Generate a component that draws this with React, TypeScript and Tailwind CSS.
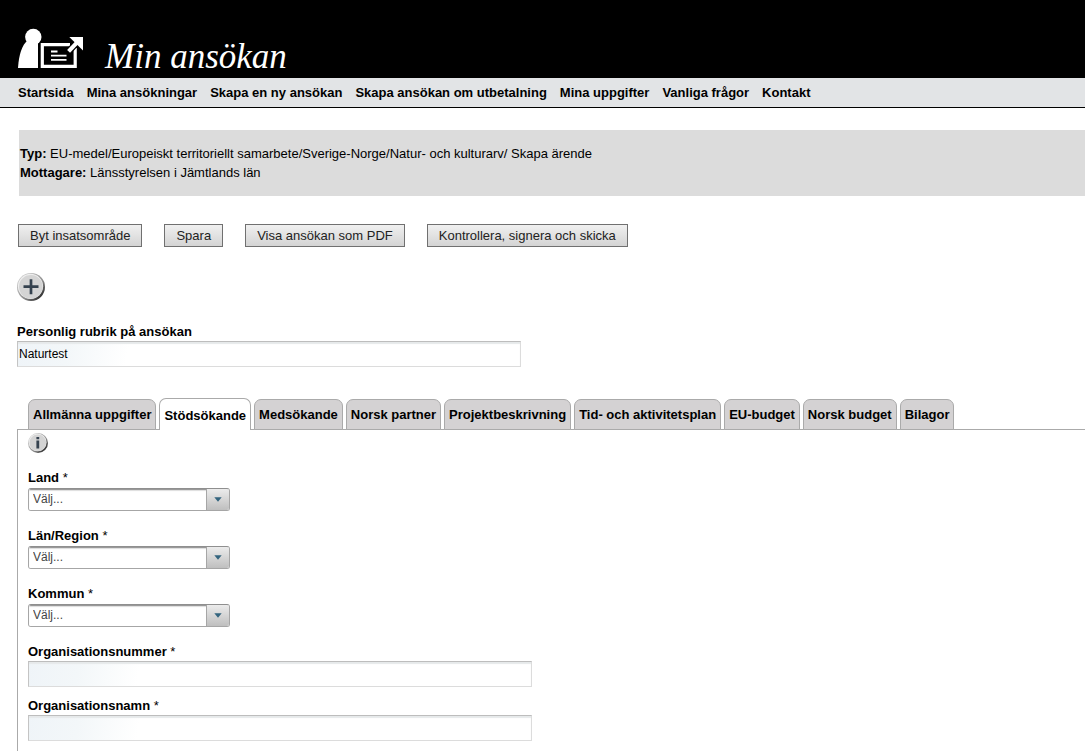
import { useState } from 'react';

const menu = [
  'Startsida',
  'Mina ansökningar',
  'Skapa en ny ansökan',
  'Skapa ansökan om utbetalning',
  'Mina uppgifter',
  'Vanliga frågor',
  'Kontakt',
];

const actions = ['Byt insatsområde', 'Spara', 'Visa ansökan som PDF', 'Kontrollera, signera och skicka'];

const tabs = [
  'Allmänna uppgifter',
  'Stödsökande',
  'Medsökande',
  'Norsk partner',
  'Projektbeskrivning',
  'Tid- och aktivitetsplan',
  'EU-budget',
  'Norsk budget',
  'Bilagor',
];

function Logo() {
  return (
    <svg width="66" height="41" viewBox="0 0 66 41" fill="none" aria-hidden="true">
      <circle cx="15.3" cy="9" r="8.2" fill="#fff" />
      <path d="M0 40C.8 27 4 17 9.5 12.5L20 13V40Z" fill="#fff" />
      <path d="M52 16.6H24.3V38.3H57.2V20" stroke="#fff" strokeWidth="3.2" />
      <path d="M33 23.5h6.5M33 27.7h15.5M33 31.9h15.5" stroke="#fff" strokeWidth="1.8" />
      {/* Arrow with a black edge that cuts the corner of the frame */}
      <path d="M49.8 24.3L60 13.5" stroke="#000" strokeWidth="6.5" />
      <path d="M51.3 9H65V22.4Z" fill="#fff" />
      <path d="M50.6 23.4L60 13.5" stroke="#fff" strokeWidth="4" />
    </svg>
  );
}

function TextField({ id, label, value, required }: { id: string; label: string; value?: string; required?: boolean }) {
  return (
    <div className="flex flex-col">
      <label htmlFor={id} className="h-5 leading-[22px] font-bold">
        {label}
        {required && <span className="font-normal"> *</span>}
      </label>
      <input
        id={id}
        type="text"
        defaultValue={value}
        className="h-[26px] w-full max-w-[504px] border border-[#dcdcdc] border-t-[#bdbdbd] border-l-[#c4c4c4] bg-[linear-gradient(100deg,#eff4f8_0,#f3f7f9_50px,#fff_110px)] px-px text-xs shadow-[inset_0_2px_1px_#e6e9ea] outline-none"
      />
    </div>
  );
}

function SelectField({ id, label }: { id: string; label: string }) {
  return (
    <div className="flex flex-col">
      <label htmlFor={id} className="h-5 leading-[22px] font-bold">
        {label}
        <span className="font-normal"> *</span>
      </label>
      <div className="relative mt-px h-[23px] w-[202px] overflow-hidden rounded-[3px] border border-[#a6a6a6] border-t-[#8f8f8f]">
        <select
          id={id}
          className="block h-full w-full appearance-none bg-white pr-7 pb-0.5 pl-1 text-xs text-[#444] shadow-[inset_0_1px_0_#999,inset_0_2px_1px_#ddd] outline-none"
        >
          <option>Välj...</option>
        </select>
        <span className="pointer-events-none absolute inset-y-0 right-0 flex w-[23px] items-center justify-center border-l border-[#a6a6a6] bg-linear-to-b from-[#ececec] to-[#bfbfbf]">
          <svg width="8" height="5" viewBox="0 0 8 5" aria-hidden="true">
            <path d="M.3 .3h7.4L4 4.7Z" fill="#33647e" />
          </svg>
        </span>
      </div>
    </div>
  );
}

export default function App() {
  const [active, setActive] = useState('Stödsökande');

  return (
    <div className="flex min-h-screen flex-col bg-white font-['Liberation_Sans',Arial,sans-serif] text-[13px] text-black">
      {/* Header */}
      <header className="flex h-[78px] items-end gap-[21px] bg-black px-[18px] pb-[9px]">
        <Logo />
        <h1 className="font-['Liberation_Serif',serif] text-[35px] leading-6 text-white italic">Min ansökan</h1>
      </header>

      {/* Menu */}
      <nav className="flex h-[30px] items-center gap-[13px] border-b border-black bg-[#e2e4e6] px-[18px] font-bold whitespace-nowrap">
        {menu.map((item) => (
          <a key={item} href="#">
            {item}
          </a>
        ))}
      </nav>

      <main className="flex flex-1 flex-col pt-[22px] pl-[17px]">
        {/* Application info */}
        <section className="ml-0.5 bg-[#dcdcdc] px-px py-3.5 leading-[19px]">
          <p>
            <b>Typ:</b> EU-medel/Europeiskt territoriellt samarbete/Sverige-Norge/Natur- och kulturarv/ Skapa ärende
          </p>
          <p>
            <b>Mottagare:</b> Länsstyrelsen i Jämtlands län
          </p>
        </section>

        {/* Actions */}
        <div className="mt-7 ml-px flex flex-wrap gap-[22px]">
          {actions.map((action) => (
            <button
              key={action}
              type="button"
              className="h-[23px] border border-[#707070] bg-linear-to-b from-[#f0f0f0] to-[#d4d4d4] px-[11px] text-[#222]"
            >
              {action}
            </button>
          ))}
        </div>

        <button type="button" aria-label="Lägg till" className="mt-[26px] mb-5 w-7">
          <svg width="28" height="28" viewBox="0 0 28 28" aria-hidden="true">
            <defs>
              <linearGradient id="rim" x1="0" y1="0" x2="1" y2="1">
                <stop offset="0.2" stopColor="#c4c4c4" />
                <stop offset="0.6" stopColor="#8a8a8a" />
                <stop offset="0.9" stopColor="#222" />
              </linearGradient>
            </defs>
            <circle cx="14" cy="14" r="14" fill="url(#rim)" />
            <circle cx="13.5" cy="13.3" r="12.6" fill="#eee" />
            <circle cx="13.8" cy="13.8" r="11.8" fill="#d4d4d4" />
            <path d="M6.5 13.7h15M14 6.2v15" stroke="#35424f" strokeWidth="2.7" />
          </svg>
        </button>

        <TextField id="rubrik" label="Personlig rubrik på ansökan" value="Naturtest" />

        {/* Tabs */}
        <div role="tablist" className="relative z-10 mt-[31px] -mb-px ml-[11px] flex items-end gap-[3px] font-bold whitespace-nowrap">
          {tabs.map((tab) => (
            <button
              key={tab}
              type="button"
              role="tab"
              aria-selected={tab === active}
              onClick={() => setActive(tab)}
              className={
                tab === active
                  ? 'h-8 rounded-t-[7px] border border-b-0 border-[#aaa] bg-white px-1 pt-0.5'
                  : 'h-[31px] rounded-t-[7px] border border-[#aaa] bg-[#d4d2d3] px-1'
              }
            >
              {tab}
            </button>
          ))}
        </div>

        {/* Applicant form */}
        <div role="tabpanel" className="flex flex-1 flex-col border-t border-l border-[#aaa] pt-[3px] pl-2.5">
          <button type="button" aria-label="Information" className="w-5">
            <svg width="20" height="20" viewBox="0 0 20 20" aria-hidden="true">
              <circle cx="10" cy="10" r="10" fill="url(#rim)" />
              <circle cx="9.6" cy="9.4" r="8.9" fill="#eee" />
              <circle cx="9.8" cy="9.8" r="8.3" fill="#d4d4d4" />
              <path d="M8.4 4h2.8v2.2H8.4zM8.4 7.4h2.8V15.6H8.4z" fill="#35424f" />
            </svg>
          </button>

          <form className="mt-3.5 flex flex-col">
            <div className="flex flex-col gap-3.5">
              <SelectField id="land" label="Land" />
              <SelectField id="lan" label="Län/Region" />
              <SelectField id="kommun" label="Kommun" />
            </div>
            <div className="mt-3.5 flex flex-col gap-2">
              <TextField id="orgnr" label="Organisationsnummer" required />
              <TextField id="orgnamn" label="Organisationsnamn" required />
            </div>
          </form>
        </div>
      </main>
    </div>
  );
}
